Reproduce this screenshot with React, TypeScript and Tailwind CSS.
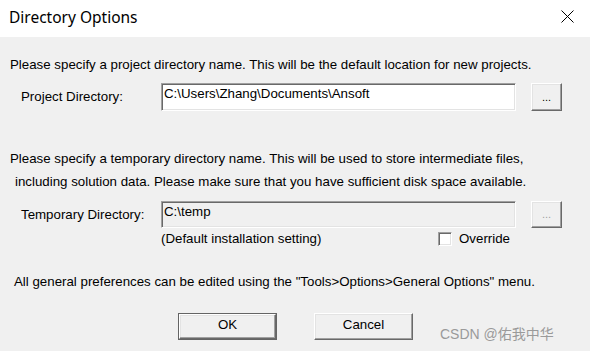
import React from 'react';

const sunken =
  'border border-t-[#a0a0a0] border-l-[#a0a0a0] border-b-white border-r-white shadow-[inset_1px_1px_0_#696969,inset_-1px_-1px_0_#e3e3e3]';
const raised =
  'border border-t-white border-l-white border-b-[#696969] border-r-[#696969] shadow-[inset_-1px_-1px_0_#a0a0a0,inset_1px_1px_0_#e3e3e3] bg-[#f0f0f0]';

const App: React.FC = () => {
  return (
    <div className="relative w-[590px] h-[351px] overflow-hidden bg-[#f0f0f0] font-['Liberation_Sans',Arial,sans-serif] text-[13.3px] text-black">
      {/* title bar */}
      <div className="h-[37px] bg-white flex items-center justify-between pl-[9px] pr-[16px]">
        <span className="font-['Noto_Sans',sans-serif] text-[15.5px] mt-[-2px] text-black">Directory Options</span>
        <svg width="13" height="13" viewBox="0 0 13 13" className="mt-[-4px]">
          <path d="M0.5 0.5 L12.5 12.5 M12.5 0.5 L0.5 12.5" stroke="#000" strokeWidth="1" fill="none" />
        </svg>
      </div>

      <div className="px-[10px]">
        <p className="mt-[20px] leading-[16px]">
          Please specify a project directory name. This will be the default location for new projects.
        </p>

        <div className="mt-[10px] flex items-center">
          <span className="w-[151px] pl-[11px] leading-[16px]">Project Directory:</span>
          <div className={`w-[355px] h-[28px] bg-white px-[2px] pt-[2px] leading-[16px] ${sunken}`}>
            C:\Users\Zhang\Documents\Ansoft
          </div>
          <button className={`ml-[15px] w-[31px] h-[28px] flex items-end justify-center pb-[7px] text-[11px] leading-none ${raised}`}>
            ...
          </button>
        </div>

        <p className="mt-[36px] leading-[23px]">
          <span className="block">
            Please specify a temporary directory name. This will be used to store intermediate files,
          </span>
          <span className="block pl-[5px]">
            including solution data. Please make sure that you have sufficient disk space available.
          </span>
        </p>

        <div className="mt-[8px] flex items-center">
          <span className="w-[151px] pl-[11px] leading-[16px]">Temporary Directory:</span>
          <div className={`w-[355px] h-[27px] bg-[#f0f0f0] px-[2px] pt-[2px] leading-[16px] ${sunken}`}>
            C:\temp
          </div>
          <button className={`ml-[15px] w-[31px] h-[27px] flex items-end justify-center pb-[7px] text-[11px] leading-none text-[#a0a0a0] ${raised}`}>
            ...
          </button>
        </div>

        <div className="mt-[2px] flex items-center h-[18px]">
          <span className="ml-[151px] w-[277px] leading-[16px]">(Default installation setting)</span>
          <span className={`w-[14px] h-[14px] bg-white ${sunken}`} />
          <span className="ml-[7px] leading-[16px]">Override</span>
        </div>

        <p className="mt-[26px] pl-[4px] leading-[16px]">
          All general preferences can be edited using the "Tools&gt;Options&gt;General Options" menu.
        </p>

        <div className="mt-[23px] flex pl-[168px] gap-[37px]">
          <button className="w-[99px] h-[27px] border border-[#646464] p-0 bg-[#f0f0f0]">
            <div className={`w-full h-full flex items-center justify-center pb-[3px] leading-[16px] ${raised}`}>OK</div>
          </button>
          <button className={`w-[99px] h-[27px] flex items-center justify-center pb-[3px] leading-[16px] ${raised}`}>
            Cancel
          </button>
        </div>
      </div>

      <div className="absolute left-[440px] top-[324px] font-['Liberation_Sans','Noto_Sans_CJK_SC',sans-serif] text-[14px] leading-[20px] text-[#9a9a9a]">
        CSDN @佑我中华
      </div>
    </div>
  );
};

export default App;
